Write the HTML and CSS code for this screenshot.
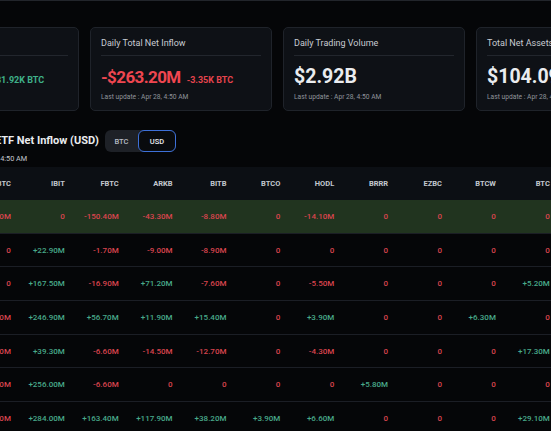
FILE: index.html
```html
<!DOCTYPE html>
<html lang="en">
<head>
<meta charset="utf-8">
<title>Bitcoin ETF Net Inflow</title>
<link rel="stylesheet" href="styles.css">
</head>
<body>
<div class="cards">
  <div class="card">
    <div class="card-title">Total Net Inflow</div>
    <div class="card-rule"></div>
    <div class="card-value gap-wide"><span class="amount">$12.14B</span><span class="sub pos-c">+81.92K BTC</span></div>
    <div class="card-note">Last update</div>
  </div>
  <div class="card">
    <div class="card-title">Daily Total Net Inflow</div>
    <div class="card-rule"></div>
    <div class="card-value"><span class="amount amount-neg">-$263.20M</span><span class="sub neg-c">-3.35K BTC</span></div>
    <div class="card-note">Last update : Apr 28, 4:50 AM</div>
  </div>
  <div class="card">
    <div class="card-title">Daily Trading Volume</div>
    <div class="card-rule"></div>
    <div class="card-value"><span class="amount">$2.92B</span></div>
    <div class="card-note">Last update : Apr 28, 4:50 AM</div>
  </div>
  <div class="card">
    <div class="card-title">Total Net Assets</div>
    <div class="card-rule"></div>
    <div class="card-value"><span class="amount">$104.09B</span></div>
    <div class="card-note">Last update : Apr 28, 4:50 AM</div>
  </div>
</div>

<div class="section-head">
  <div class="head-text">
    <div class="head-title">Bitcoin Spot ETF Net Inflow (USD)</div>
    <div class="head-sub">Last update : Apr 28, 4:50 AM</div>
  </div>
  <div class="seg">
    <button class="seg-btn">BTC</button>
    <button class="seg-btn seg-active">USD</button>
  </div>
</div>

<div class="grid">
  <div class="tr thead">
    <div class="th">GBTC</div><div class="th">IBIT</div><div class="th">FBTC</div><div class="th">ARKB</div><div class="th">BITB</div><div class="th">BTCO</div><div class="th">HODL</div><div class="th">BRRR</div><div class="th">EZBC</div><div class="th">BTCW</div><div class="th">BTC</div><div class="th">DEFI</div>
  </div>
  <div class="tr row hl">
    <div class="td n">-139.40M</div><div class="td n">0</div><div class="td n">-150.40M</div><div class="td n">-43.30M</div><div class="td n">-8.80M</div><div class="td n">0</div><div class="td n">-14.10M</div><div class="td n">0</div><div class="td n">0</div><div class="td n">0</div><div class="td n">0</div><div class="td n">0</div>
  </div>
  <div class="tr row">
    <div class="td n">0</div><div class="td p">+22.90M</div><div class="td n">-1.70M</div><div class="td n">-9.00M</div><div class="td n">-8.90M</div><div class="td n">0</div><div class="td n">0</div><div class="td n">0</div><div class="td n">0</div><div class="td n">0</div><div class="td n">0</div><div class="td n">0</div>
  </div>
  <div class="tr row">
    <div class="td n">0</div><div class="td p">+167.50M</div><div class="td n">-16.90M</div><div class="td p">+71.20M</div><div class="td n">-7.60M</div><div class="td n">0</div><div class="td n">-5.50M</div><div class="td n">0</div><div class="td n">0</div><div class="td n">0</div><div class="td p">+5.20M</div><div class="td n">0</div>
  </div>
  <div class="tr row">
    <div class="td n">-130.40M</div><div class="td p">+246.90M</div><div class="td p">+56.70M</div><div class="td p">+11.90M</div><div class="td p">+15.40M</div><div class="td n">0</div><div class="td p">+3.90M</div><div class="td n">0</div><div class="td n">0</div><div class="td p">+6.30M</div><div class="td n">0</div><div class="td n">0</div>
  </div>
  <div class="tr row">
    <div class="td n">-75.10M</div><div class="td p">+39.30M</div><div class="td n">-6.60M</div><div class="td n">-14.50M</div><div class="td n">-12.70M</div><div class="td n">0</div><div class="td n">-4.30M</div><div class="td n">0</div><div class="td n">0</div><div class="td n">0</div><div class="td p">+17.30M</div><div class="td n">0</div>
  </div>
  <div class="tr row">
    <div class="td n">-50.90M</div><div class="td p">+256.00M</div><div class="td n">-6.60M</div><div class="td n">0</div><div class="td n">0</div><div class="td n">0</div><div class="td n">0</div><div class="td p">+5.80M</div><div class="td n">0</div><div class="td n">0</div><div class="td n">0</div><div class="td n">0</div>
  </div>
  <div class="tr row">
    <div class="td n">-154.90M</div><div class="td p">+284.00M</div><div class="td p">+163.40M</div><div class="td p">+117.90M</div><div class="td p">+38.20M</div><div class="td p">+3.90M</div><div class="td p">+6.60M</div><div class="td n">0</div><div class="td n">0</div><div class="td n">0</div><div class="td p">+29.10M</div><div class="td n">0</div>
  </div>
</div>
</body>
</html>
```
FILE: styles.css
```css
* { box-sizing: border-box; margin: 0; padding: 0; }
html, body { background: #050608; }
body {
  width: 551px;
  height: 431px;
  overflow: hidden;
  font-family: Roboto, "Liberation Sans", sans-serif;
  color: #eaecef;
  border-top: 1px solid #22252b;
}

.cards {
  display: flex;
  gap: 11px;
  margin: 26px 0 0 -103px;
}
.card {
  flex: 0 0 182px;
  height: 84px;
  background: #0e1116;
  border: 1px solid #1f232a;
  border-radius: 5px;
  padding: 9px 10px 0;
  overflow: hidden;
}
.card-title {
  font-size: 9px;
  line-height: 12px;
  color: #c8ccd2;
  white-space: nowrap;
}
.card-rule { height: 1px; background: #22262d; margin-top: 6px; }
.card-value {
  display: flex;
  align-items: baseline;
  gap: 6px;
  margin-top: 10px;
  height: 22px;
  line-height: 22px;
  white-space: nowrap;
}
.gap-wide { gap: 9px; }
.amount { font-size: 19.5px; font-weight: 700; color: #eaecef; }
.amount-neg { font-size: 17px; color: #ef4650; letter-spacing: -0.6px; }
.sub { font-size: 9px; font-weight: 700; }
.neg-c { color: #e5444d; }
.pos-c { color: #3fb28a; }
.card-note {
  font-size: 6.7px;
  line-height: 10px;
  color: #8e939b;
  margin-top: 4px;
  white-space: nowrap;
}

.section-head {
  width: 176px;
  display: flex;
  justify-content: flex-end;
  align-items: flex-start;
  gap: 6px;
  margin-top: 19px;
}
.head-text { flex: 0 0 auto; }
.head-title {
  font-size: 11px;
  font-weight: 700;
  line-height: 22px;
  color: #eaecef;
  white-space: nowrap;
}
.head-sub {
  margin-top: 2px;
  font-size: 7.3px;
  line-height: 10px;
  color: #c4c8ce;
  white-space: nowrap;
}
.seg {
  flex: 0 0 71px;
  display: flex;
  height: 22px;
  background: #1e2127;
  border-radius: 6px;
}
.seg-btn {
  font-family: inherit;
  font-size: 7.5px;
  font-weight: 500;
  border: 0;
  background: transparent;
  color: #b7bdc6;
  width: 33px;
  border-radius: 6px;
}
.seg-active {
  width: 38px;
  background: #090b0e;
  border: 1.5px solid #3d70d8;
  color: #eaecef;
}

.grid {
  margin: 3px 0 0 -43px;
  width: 650px;
}
.tr {
  display: grid;
  grid-template-columns: repeat(12, 53.9px);
  align-items: center;
}
.thead { height: 33px; background: #0c0f14; }
.th {
  font-size: 7.5px;
  font-weight: 700;
  color: #c3c8cf;
  text-align: right;
}
.row { height: 33.7px; border-bottom: 1px solid #1b1e25; }
.row.hl { background: #21341f; }
.td { font-size: 8px; font-weight: 500; text-align: right; white-space: nowrap; }
.n { color: #d9444e; }
.p { color: #48a98a; }
```
